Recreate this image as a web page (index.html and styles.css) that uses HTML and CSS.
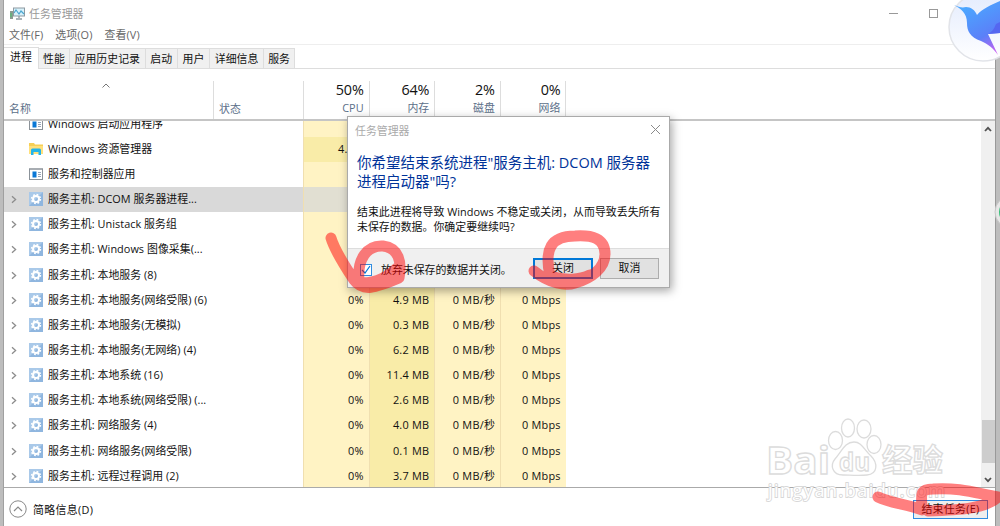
FILE: index.html
```html
<!DOCTYPE html>
<html lang="zh-CN">
<head>
    <meta charset="UTF-8">
    <title>任务管理器</title>
    <link rel="stylesheet" href="styles.css">
</head>
<body>
    <svg width="0" height="0" class="defs">
        <symbol id="gear" viewBox="0 0 14 14">
            <rect width="14" height="14" fill="#a9c9e9"/>
            <path d="M0 14L14 0V14Z" fill="#8fb6df"/>
            <circle cx="7" cy="7" r="3" fill="none" stroke="#fff" stroke-width="2"/>
            <circle cx="7" cy="7" r="4.4" fill="none" stroke="#fff" stroke-width="1.6" stroke-dasharray="1.7 1.755"/>
        </symbol>
        <symbol id="app" viewBox="0 0 14 14">
            <rect x=".5" y="2" width="13" height="10.5" fill="#fff" stroke="#8b9299"/>
            <path d="M0 2h14" stroke="#8b9299"/>
            <rect x="3.5" y="4.5" width="4" height="6" fill="#0a78d6"/>
            <path d="M9 5.5h3M9 7.5h3M9 9.5h3" stroke="#8b9bb0" stroke-width=".9"/>
        </symbol>
        <symbol id="folder" viewBox="0 0 14 14">
            <path d="M0 1h5l1 1.500h8V12H0Z" fill="#f7cf55"/>
            <path d="M0 4h14v8H0Z" fill="#ffe07c"/>
            <path d="M2 13V8q0-1.500 1.500-1.500h7Q12 6.500 12 8v5H9.500V10h-5v3Z" fill="#23b4ea"/>
        </symbol>
        <symbol id="arrow" viewBox="0 0 6 8">
            <path d="M1 .8L4.600 4L1 7.200" fill="none" stroke="#8c8c8c" stroke-width="1.300"/>
        </symbol>
    </svg>

    <div class="window">
        <div class="titlebar">
            <svg class="app-icon" width="15" height="13" viewBox="0 0 15 13">
                <rect x="0" y="4" width="3" height="8" fill="#8a9a91"/>
                <path d="M1 6v4" stroke="#46c36b"/>
                <rect x="3.500" y="1" width="11" height="8" fill="#d9f2fb" stroke="#8d9aa2"/>
                <path d="M4 6l2-3 3 4 2-3 3 3" fill="none" stroke="#4ba6cf" stroke-width="1.200"/>
                <path d="M9 9v2M6 12h6" stroke="#8d9aa2" stroke-width="1.300"/>
            </svg>
            <span>任务管理器</span>
            <div class="win-buttons">
                <i class="min"></i>
                <i class="max"></i>
            </div>
        </div>
        <div class="menu">
            <span>文件(F)</span>
            <span>选项(O)</span>
            <span>查看(V)</span>
        </div>
        <div class="tabs">
            <div class="tab active">进程</div>
            <div class="tab w31">性能</div>
            <div class="tab w76">应用历史记录</div>
            <div class="tab w32">启动</div>
            <div class="tab w32">用户</div>
            <div class="tab w54">详细信息</div>
            <div class="tab w31">服务</div>
        </div>

        <div class="header">
            <div class="h-name">
                <svg class="sort" width="8" height="5" viewBox="0 0 8 5"><path d="M.5 4.500L4 1l3.500 3.500" fill="none" stroke="#777"/></svg>
                名称
            </div>
            <div class="h-status">状态</div>
            <div class="h-num"><b>50%</b>CPU</div>
            <div class="h-num"><b>64%</b>内存</div>
            <div class="h-num"><b>2%</b>磁盘</div>
            <div class="h-num last"><b>0%</b>网络</div>
        </div>

        <div class="body">
            <div class="rows">
                <div class="row"><div class="name"><i></i><svg class="ic"><use href="#app"/></svg>Windows 启动应用程序</div><div class="cell"></div><div class="cell mem"></div><div class="cell"></div><div class="cell"></div></div>
                <div class="row"><div class="name"><i></i><svg class="ic"><use href="#folder"/></svg>Windows 资源管理器</div><div class="cell hot cut">4.</div><div class="cell mem"></div><div class="cell"></div><div class="cell"></div></div>
                <div class="row"><div class="name"><i></i><svg class="ic"><use href="#app"/></svg>服务和控制器应用</div><div class="cell"></div><div class="cell mem"></div><div class="cell"></div><div class="cell"></div></div>
                <div class="row selected"><div class="name"><svg class="ar"><use href="#arrow"/></svg><svg class="ic"><use href="#gear"/></svg>服务主机: DCOM 服务器进程...</div><div class="cell"></div><div class="cell mem"></div><div class="cell"></div><div class="cell"></div></div>
                <div class="row"><div class="name"><svg class="ar"><use href="#arrow"/></svg><svg class="ic"><use href="#gear"/></svg>服务主机: Unistack 服务组</div><div class="cell"></div><div class="cell mem"></div><div class="cell"></div><div class="cell"></div></div>
                <div class="row"><div class="name"><svg class="ar"><use href="#arrow"/></svg><svg class="ic"><use href="#gear"/></svg>服务主机: Windows 图像采集(...</div><div class="cell"></div><div class="cell mem"></div><div class="cell"></div><div class="cell"></div></div>
                <div class="row"><div class="name"><svg class="ar"><use href="#arrow"/></svg><svg class="ic"><use href="#gear"/></svg>服务主机: 本地服务 (8)</div><div class="cell"></div><div class="cell mem"></div><div class="cell"></div><div class="cell"></div></div>
                <div class="row"><div class="name"><svg class="ar"><use href="#arrow"/></svg><svg class="ic"><use href="#gear"/></svg>服务主机: 本地服务(网络受限) (6)</div><div class="cell">0%</div><div class="cell mem">4.9 MB</div><div class="cell">0 MB/秒</div><div class="cell">0 Mbps</div></div>
                <div class="row"><div class="name"><svg class="ar"><use href="#arrow"/></svg><svg class="ic"><use href="#gear"/></svg>服务主机: 本地服务(无模拟)</div><div class="cell">0%</div><div class="cell mem">0.3 MB</div><div class="cell">0 MB/秒</div><div class="cell">0 Mbps</div></div>
                <div class="row"><div class="name"><svg class="ar"><use href="#arrow"/></svg><svg class="ic"><use href="#gear"/></svg>服务主机: 本地服务(无网络) (4)</div><div class="cell">0%</div><div class="cell mem">6.2 MB</div><div class="cell">0 MB/秒</div><div class="cell">0 Mbps</div></div>
                <div class="row"><div class="name"><svg class="ar"><use href="#arrow"/></svg><svg class="ic"><use href="#gear"/></svg>服务主机: 本地系统 (16)</div><div class="cell">0%</div><div class="cell mem">11.4 MB</div><div class="cell">0 MB/秒</div><div class="cell">0 Mbps</div></div>
                <div class="row"><div class="name"><svg class="ar"><use href="#arrow"/></svg><svg class="ic"><use href="#gear"/></svg>服务主机: 本地系统(网络受限) (...</div><div class="cell">0%</div><div class="cell mem">2.6 MB</div><div class="cell">0 MB/秒</div><div class="cell">0 Mbps</div></div>
                <div class="row"><div class="name"><svg class="ar"><use href="#arrow"/></svg><svg class="ic"><use href="#gear"/></svg>服务主机: 网络服务 (4)</div><div class="cell">0%</div><div class="cell mem">4.0 MB</div><div class="cell">0 MB/秒</div><div class="cell">0 Mbps</div></div>
                <div class="row"><div class="name"><svg class="ar"><use href="#arrow"/></svg><svg class="ic"><use href="#gear"/></svg>服务主机: 网络服务(网络受限)</div><div class="cell">0%</div><div class="cell mem">0.1 MB</div><div class="cell">0 MB/秒</div><div class="cell">0 Mbps</div></div>
                <div class="row"><div class="name"><svg class="ar"><use href="#arrow"/></svg><svg class="ic"><use href="#gear"/></svg>服务主机: 远程过程调用 (2)</div><div class="cell">0%</div><div class="cell mem">3.7 MB</div><div class="cell">0 MB/秒</div><div class="cell">0 Mbps</div></div>
            </div>
            <div class="scrollbar">
                <svg width="8" height="6" viewBox="0 0 8 6"><path d="M1 5l3-3.200L7 5" fill="none" stroke="#505050" stroke-width="1.800"/></svg>
                <div class="thumb"></div>
                <svg width="8" height="6" viewBox="0 0 8 6"><path d="M1 1l3 3.200L7 1" fill="none" stroke="#505050" stroke-width="1.800"/></svg>
            </div>
        </div>

        <div class="footer">
            <svg width="18" height="18" viewBox="0 0 18 18"><circle cx="9" cy="9" r="8.200" fill="none" stroke="#888"/><path d="M5 11l4-4 4 4" fill="none" stroke="#888" stroke-width="1.200"/></svg>
            <span>简略信息(D)</span>
            <div class="end-task">结束任务(E)</div>
        </div>
    </div>

    <div class="dialog">
        <div class="dlg-title">
            <span>任务管理器</span>
            <svg width="11" height="11" viewBox="0 0 11 11"><path d="M1 1l9 9M10 1l-9 9" stroke="#8a8a8a"/></svg>
        </div>
        <div class="dlg-main">
            <div class="question">你希望结束系统进程"服务主机: DCOM 服务器<br>进程启动器"吗?</div>
            <div class="detail">结束此进程将导致 Windows 不稳定或关闭，从而导致丢失所有<br>未保存的数据。你确定要继续吗?</div>
        </div>
        <div class="dlg-foot">
            <div class="check"><svg width="12" height="12" viewBox="0 0 12 12"><path d="M2 6l3 3 5-7" fill="none" stroke="#0078d7" stroke-width="1.200"/></svg></div>
            <span>放弃未保存的数据并关闭。</span>
            <div class="btn primary">关闭</div>
            <div class="btn">取消</div>
        </div>
    </div>

    <!-- watermark, bird badge and pen marks lie over everything -->
    <svg class="overlay" width="1000" height="526" viewBox="0 0 1000 526">
        <defs>
            <linearGradient id="bird" gradientUnits="userSpaceOnUse" x1="970" y1="5" x2="997" y2="55">
                <stop offset="0" stop-color="#4ba6ff"/>
                <stop offset=".6" stop-color="#5b80f8"/>
                <stop offset="1" stop-color="#d95cf0"/>
            </linearGradient>
            <linearGradient id="badge" x1="0" y1="0" x2="0" y2="1">
                <stop offset="0" stop-color="#e3ebfd"/>
                <stop offset="1" stop-color="#fff"/>
            </linearGradient>
        </defs>
        <g class="wm">
            <text x="766" y="474" font-size="38" font-weight="bold" textLength="64" lengthAdjust="spacingAndGlyphs">Bai</text>
            <ellipse cx="835.500" cy="440.500" rx="7" ry="9"/>
            <ellipse cx="848" cy="428" rx="6.500" ry="9"/>
            <ellipse cx="864" cy="429" rx="7" ry="9"/>
            <ellipse cx="874" cy="444.500" rx="7" ry="9"/>
            <path d="M854 442c8 0 10 8 17 14 7 7 7 18-4 19-8 1-18 0-24 0-11 0-13-10-8-16 7-8 10-17 19-17Z"/>
            <text x="839" y="471" font-size="25" font-weight="bold" textLength="31" lengthAdjust="spacingAndGlyphs">du</text>
            <text x="882" y="471" font-size="31" font-weight="bold" textLength="61" lengthAdjust="spacingAndGlyphs">经验</text>
            <text class="url" x="768" y="497" font-size="18" textLength="177">jingyan.baidu.com</text>
        </g>
        <circle cx="983" cy="27" r="34" fill="url(#badge)" stroke="#e2e4e9" stroke-width="1.500"/>
        <path d="M954 5C959 7 962 8 966 7C971 7 975 10 977 15C982 9 991 5 1000 1V33L988 34L998 55C993 48 988 44 981 41C970 37 967 31 967 23C967 13 961 9 954 5Z" fill="url(#bird)"/>
        <path d="M1000 22L996 24C994 29 992 32 988 34L1000 33Z" fill="#5567f0"/>
        <circle cx="1011" cy="212" r="16" fill="#e7e7e7" stroke="#c7c7c7"/>
        <circle cx="1011" cy="212" r="12" fill="#35bd78"/>
        <g class="pen">
            <path d="M331 238C334 248 346 268 354 280C363 292 375 288 399 278C402 262 399 248 383 246C367 245 357 259 359 281C370 286 385 279 397 268"/>
            <path d="M534 271C550 284 566 286 575 283C592 278 605 268 605 254C605 238 592 235 575 236C551 236 544 249 550 276C565 281 580 280 590 275"/>
            <path d="M878 497C890 503 907 504 922 510C922 496 918 489 933 489C960 487 979 494 998 497C986 509 958 510 928 511L922 507"/>
        </g>
    </svg>
</body>
</html>
```
FILE: styles.css
```css
* {
    box-sizing: border-box;
}
body {
    margin: 0;
    width: 1000px;
    height: 526px;
    overflow: hidden;
    position: relative;
    background-color: #bdbdbd;
    padding: 0 4px 0 3px;
    font-family: "Open Sans", "Noto Sans CJK SC", sans-serif;
    font-size: 10.900px;
    color: #111;
    white-space: nowrap;
}
.defs {
    position: absolute;
}
.window {
    height: 526px;
    background-color: #fff;
    border-left: 1px solid #a0a0a0;
    border-right: 1px solid #999;
    display: flex;
    flex-direction: column;
}
.titlebar {
    height: 26px;
    display: flex;
    align-items: center;
    padding-left: 6px;
    color: #999;
}
.titlebar span {
    margin-left: 4px;
}
.win-buttons {
    margin-left: auto;
    display: flex;
    align-items: center;
    gap: 31px;
    padding-right: 57px;
}
.min {
    width: 9px;
    height: 1px;
    background-color: #999;
}
.max {
    width: 9px;
    height: 9px;
    border: 1px solid #999;
}
.menu {
    height: 19px;
    line-height: 18px;
    display: flex;
    gap: 12px;
    padding-left: 5px;
    color: #666;
    letter-spacing: 0.100px;
    border-bottom: 1px solid #eee;
}
.tabs {
    height: 24px;
    padding-top: 2px;
    display: flex;
    align-items: flex-end;
    border-bottom: 1px solid #ddd;
}
.tab {
    height: 20px;
    line-height: 19px;
    text-align: center;
    background-color: #f0f0f0;
    border: 1px solid #ddd;
    border-left: none;
    border-bottom: none;
}
.tab.active {
    width: 35px;
    height: 22px;
    line-height: 18px;
    margin-bottom: -1px;
    background-color: #fff;
}
.w31 { width: 31px; }
.w32 { width: 32.300px; }
.w54 { width: 54px; }
.w76 { width: 75.500px; }

.header {
    height: 52px;
    padding-top: 12px;
    display: flex;
    color: #5c6f89;
    border-bottom: 2px solid #c5c5c5;
}
.h-name {
    width: 210px;
    padding: 19px 0 0 5px;
    border-right: 1px solid #ddd;
    position: relative;
}
.sort {
    position: absolute;
    left: 98px;
    top: 2px;
}
.h-status {
    width: 90px;
    padding: 19px 0 0 5px;
    border-right: 1px solid #ddd;
}
.h-num {
    width: 65.600px;
    padding-right: 5px;
    border-right: 1px solid #ddd;
    text-align: right;
    line-height: 19px;
}
.h-num b {
    display: block;
    font-size: 14.400px;
    font-weight: normal;
    line-height: 17px;
    letter-spacing: -0.200px;
    color: #111;
}

.body {
    height: 366px;
    display: flex;
    justify-content: space-between;
    overflow: hidden;
}
.rows {
    width: 563px;
    margin-top: -9.400px;
}
.row {
    display: flex;
    height: 25.170px;
    line-height: 23px;
}
.name {
    width: 299px;
    display: flex;
    white-space: pre;
    letter-spacing: 0.040px;
}
.name i,
.ar {
    width: 6px;
    height: 9px;
    margin: 8px 12px 0 7px;
}
.ic {
    width: 14px;
    height: 14px;
    margin: 5px 5px 0 0;
}
.cell {
    width: 65.700px;
    padding-right: 5px;
    text-align: right;
    letter-spacing: 0.250px;
    background-color: #fff3c4;
    border-left: 1px solid #f0dfb0;
}
.cell.mem,
.cell.hot {
    background-color: #f9eca8;
}
.cell.cut {
    text-align: left;
    padding-left: 34px;
}
.selected,
.selected .cell {
    background-color: #d9d9d9;
}
.selected .cell {
    background-color: #e1dfd2;
}
.scrollbar {
    width: 14px;
    background-color: #f0f0f0;
    display: flex;
    flex-direction: column;
    align-items: center;
    padding: 5px 0 4px;
}
.thumb {
    width: 13px;
    height: 43px;
    margin: auto 0 14px;
    background-color: #cdcdcd;
}

.footer {
    flex: 1;
    border-top: 1px solid #aaa;
    display: flex;
    align-items: center;
    padding: 4px 7px 0 5px;
}
.footer span {
    margin-left: 6px;
    letter-spacing: 0.350px;
}
.end-task {
    margin-left: auto;
    width: 75px;
    height: 19px;
    line-height: 16px;
    text-align: center;
    letter-spacing: 0.300px;
    border: 1px solid #2f8ce0;
    background-color: #eee;
}

.dialog {
    position: absolute;
    left: 347px;
    top: 116px;
    width: 323px;
    height: 172px;
    background-color: #fff;
    border: 1px solid #aaa;
    box-shadow: 2px 3px 9px rgba(0, 0, 0, 0.35);
    display: flex;
    flex-direction: column;
}
.dlg-title {
    height: 25px;
    display: flex;
    align-items: center;
    justify-content: space-between;
    padding: 0 8px 0 7px;
    color: #aaa;
}
.dlg-main {
    flex: 1;
    padding: 11px 0 0 9px;
}
.question {
    color: #003399;
    font-size: 14.500px;
    line-height: 19px;
}
.detail {
    margin-top: 13px;
    line-height: 15px;
    letter-spacing: 0.030px;
}
.dlg-foot {
    height: 39px;
    background-color: #f0f0f0;
    border-top: 1px solid #ddd;
    display: flex;
    align-items: center;
    padding: 0 10px 0 12px;
}
.check {
    width: 12px;
    height: 12px;
    margin-top: 3px;
    background-color: #fff;
    border: 1px solid #2f8ce0;
}
.check svg {
    display: block;
    margin: -1px;
}
.dlg-foot span {
    margin: 1px auto 0 9px;
}
.btn {
    width: 59px;
    height: 21px;
    line-height: 18px;
    text-align: center;
    background-color: #e1e1e1;
    border: 1px solid #adadad;
}
.btn.primary {
    width: 60px;
    line-height: 16px;
    margin-right: 7px;
    border: 2px solid #0078d7;
}

.overlay {
    position: absolute;
    left: 0;
    top: 0;
}
.wm {
    fill: #fff;
    stroke: #dcdcdc;
    stroke-width: 1.300px;
    font-family: "Open Sans", "Noto Sans CJK SC", sans-serif;
}
.wm .url {
    fill: #fff;
    stroke: #d8d8d8;
    stroke-width: 1.800px;
    paint-order: stroke;
}
.pen {
    fill: none;
    stroke: #ff0000;
    stroke-opacity: 0.5;
    stroke-width: 11px;
    stroke-linecap: round;
    stroke-linejoin: round;
}
```
